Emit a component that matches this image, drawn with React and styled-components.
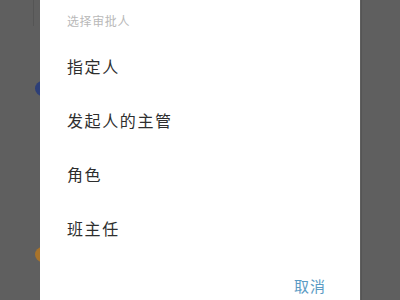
import React from "react";
import styled, { createGlobalStyle } from "styled-components";

const GlobalStyle = createGlobalStyle`
    html, body {
        margin: 0;
        padding: 0;
        background: #5f5f5f;
    }
    body {
        font-family: "Noto Sans CJK SC", "Noto Sans", sans-serif;
    }
`;

const Screen = styled.div`
    position: relative;
    width: 400px;
    height: 300px;
    overflow: hidden;
    background: #5f5f5f;
    display: flex;
    justify-content: center;
`;

const Avatar = styled.span`
    position: absolute;
    left: 35px;
    top: ${p => p.top}px;
    width: 15px;
    height: 15px;
    border-radius: 50%;
    background: ${p => p.color};
`;

const EdgeLine = styled.span`
    position: absolute;
    left: ${p => p.left}px;
    top: 0;
    width: 1px;
    height: ${p => p.height}px;
    background: #555;
`;

const Dialog = styled.div`
    position: relative;
    z-index: 1;
    width: 320px;
    height: 300px;
    background: #ffffff;
    display: flex;
    flex-direction: column;
    box-sizing: border-box;
    padding: 0 34px 0 27px;
`;

const Title = styled.div`
    height: 39px;
    padding-top: 12px;
    box-sizing: border-box;
    font-size: 12px;
    line-height: 18px;
    color: #b9b9b9;
    letter-spacing: 0.6px;
`;

const Option = styled.div`
    height: 54px;
    display: flex;
    align-items: center;
    font-size: 16px;
    color: #2e2e2e;
    letter-spacing: 1.6px;
`;

const Footer = styled.div`
    margin-top: auto;
    height: 23px;
    display: flex;
    justify-content: flex-end;
    align-items: flex-start;
`;

const CancelButton = styled.span`
    font-size: 15px;
    line-height: 18px;
    color: #5b9bc4;
    letter-spacing: 1px;
`;

const options = ["指定人", "发起人的主管", "角色", "班主任"];

export default function App() {
    return (
        <Screen>
            <GlobalStyle />
            <EdgeLine left={33} height={26} />
            <EdgeLine left={361} height={300} />
            <Avatar top={81} color="#2d3f78" />
            <Avatar top={247} color="#a8732a" />
            <Dialog>
                <Title>选择审批人</Title>
                {options.map(o => (
                    <Option key={o}>{o}</Option>
                ))}
                <Footer>
                    <CancelButton>取消</CancelButton>
                </Footer>
            </Dialog>
        </Screen>
    );
}
